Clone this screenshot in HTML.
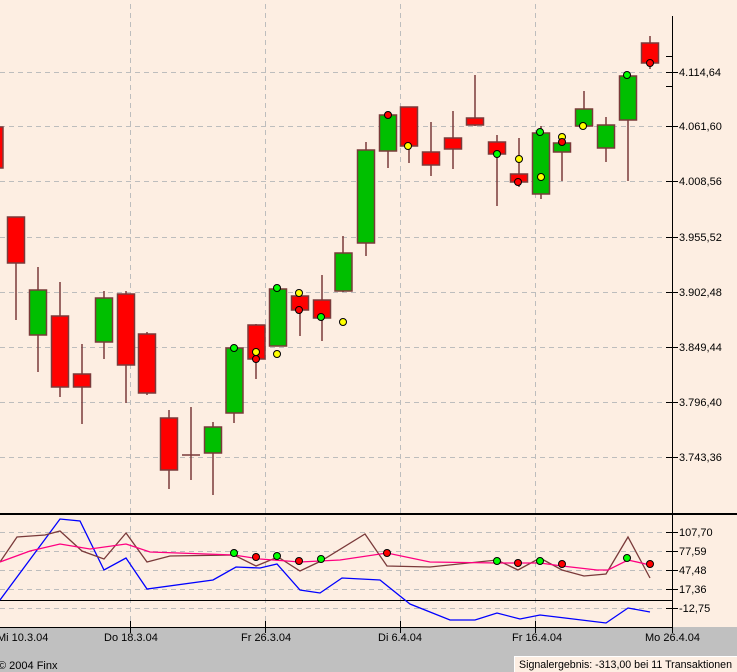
<!DOCTYPE html>
<html><head><meta charset="utf-8"><style>
html,body{margin:0;padding:0;background:#c0c0c0;}
svg{display:block;font-family:"Liberation Sans",sans-serif;}
</style></head><body>
<svg width="737" height="672" viewBox="0 0 737 672" xmlns="http://www.w3.org/2000/svg">
<rect x="0" y="0" width="737" height="627" fill="#fdeee2"/>
<rect x="0" y="627" width="737" height="45" fill="#c0c0c0"/>
<g stroke="#bdbdbd" stroke-width="1" stroke-dasharray="5,4">
<line x1="0" y1="72.5" x2="668" y2="72.5"/>
<line x1="0" y1="126.5" x2="668" y2="126.5"/>
<line x1="0" y1="181.5" x2="668" y2="181.5"/>
<line x1="0" y1="237.5" x2="668" y2="237.5"/>
<line x1="0" y1="292.5" x2="668" y2="292.5"/>
<line x1="0" y1="347.5" x2="668" y2="347.5"/>
<line x1="0" y1="402.5" x2="668" y2="402.5"/>
<line x1="0" y1="457.5" x2="668" y2="457.5"/>
<line x1="0" y1="532.5" x2="668" y2="532.5"/>
<line x1="0" y1="551.5" x2="668" y2="551.5"/>
<line x1="0" y1="570.5" x2="668" y2="570.5"/>
<line x1="0" y1="589.5" x2="668" y2="589.5"/>
<line x1="0" y1="608.5" x2="668" y2="608.5"/>
<line x1="130.5" y1="4" x2="130.5" y2="627"/>
<line x1="265.5" y1="4" x2="265.5" y2="627"/>
<line x1="400.5" y1="4" x2="400.5" y2="627"/>
<line x1="535.5" y1="4" x2="535.5" y2="627"/>
</g>
<g stroke="#000">
<line x1="672.5" y1="16" x2="672.5" y2="627"/>
<line x1="0" y1="514" x2="737" y2="514" stroke-width="2"/>
<line x1="0" y1="600.5" x2="672" y2="600.5"/>
<line x1="0" y1="627.5" x2="672" y2="627.5"/>
<line x1="666" y1="56.5" x2="672" y2="56.5"/><line x1="666" y1="86.5" x2="672" y2="86.5"/>
<line x1="666" y1="72.5" x2="678" y2="72.5"/><line x1="666" y1="126.5" x2="678" y2="126.5"/>
<line x1="666" y1="181.5" x2="678" y2="181.5"/><line x1="666" y1="237.5" x2="678" y2="237.5"/>
<line x1="666" y1="292.5" x2="678" y2="292.5"/><line x1="666" y1="347.5" x2="678" y2="347.5"/>
<line x1="666" y1="402.5" x2="678" y2="402.5"/><line x1="666" y1="457.5" x2="678" y2="457.5"/>
<line x1="666" y1="532.5" x2="678" y2="532.5"/><line x1="666" y1="551.5" x2="678" y2="551.5"/>
<line x1="666" y1="570.5" x2="678" y2="570.5"/><line x1="666" y1="589.5" x2="678" y2="589.5"/>
<line x1="666" y1="608.5" x2="678" y2="608.5"/>
<line x1="130.5" y1="621" x2="130.5" y2="633"/><line x1="265.5" y1="621" x2="265.5" y2="633"/>
<line x1="400.5" y1="621" x2="400.5" y2="633"/><line x1="535.5" y1="621" x2="535.5" y2="633"/>
<line x1="672.5" y1="621" x2="672.5" y2="633"/>
</g>
<g font-size="11" fill="#000">
<text x="679" y="76">4.114,64</text><text x="679" y="130">4.061,60</text>
<text x="679" y="185">4.008,56</text><text x="679" y="241">3.955,52</text>
<text x="679" y="296">3.902,48</text><text x="679" y="351">3.849,44</text>
<text x="679" y="406">3.796,40</text><text x="679" y="461">3.743,36</text>
<text x="679" y="536">107,70</text><text x="679" y="555">77,59</text>
<text x="679" y="574">47,48</text><text x="679" y="593">17,36</text>
<text x="679" y="612">-12,75</text>
<text x="-3" y="641">Mi 10.3.04</text><text x="104" y="641">Do 18.3.04</text>
<text x="241" y="641">Fr 26.3.04</text><text x="378" y="641">Di 6.4.04</text>
<text x="512" y="641">Fr 16.4.04</text><text x="645" y="641">Mo 26.4.04</text>
<text x="-2" y="669">© 2004 Finx</text>
</g>
<rect x="514.5" y="656.5" width="224" height="16" fill="#fdeee2" stroke="#fff"/>
<text x="519" y="668" font-size="11" textLength="213" lengthAdjust="spacingAndGlyphs">Signalergebnis: -313,00 bei 11 Transaktionen</text>
<g stroke="#7a3a3a" stroke-width="1.5">
<line x1="16" y1="217" x2="16" y2="320"/><line x1="38" y1="267" x2="38" y2="372"/>
<line x1="60" y1="282" x2="60" y2="397"/><line x1="82" y1="344" x2="82" y2="424"/>
<line x1="104" y1="291" x2="104" y2="359"/><line x1="126" y1="291" x2="126" y2="403"/>
<line x1="147" y1="332" x2="147" y2="395"/><line x1="169" y1="410" x2="169" y2="489"/>
<line x1="191" y1="407" x2="191" y2="480"/><line x1="182" y1="455" x2="200" y2="455"/>
<line x1="213" y1="422" x2="213" y2="495"/><line x1="234" y1="347" x2="234" y2="423"/>
<line x1="256" y1="324" x2="256" y2="379"/><line x1="278" y1="285" x2="278" y2="346"/>
<line x1="300" y1="290" x2="300" y2="336"/><line x1="322" y1="275" x2="322" y2="341"/>
<line x1="343" y1="236" x2="343" y2="292"/><line x1="366" y1="142" x2="366" y2="256"/>
<line x1="388" y1="113" x2="388" y2="168"/><line x1="409" y1="107" x2="409" y2="163"/>
<line x1="431" y1="122" x2="431" y2="176"/><line x1="453" y1="111" x2="453" y2="169"/>
<line x1="475" y1="75" x2="475" y2="126"/><line x1="497" y1="135" x2="497" y2="206"/>
<line x1="519" y1="138" x2="519" y2="187"/><line x1="541" y1="126" x2="541" y2="199"/>
<line x1="562" y1="135" x2="562" y2="181"/><line x1="584" y1="91" x2="584" y2="126"/>
<line x1="606" y1="117" x2="606" y2="162"/><line x1="628" y1="76" x2="628" y2="181"/>
<line x1="650" y1="36" x2="650" y2="69"/>
</g>
<g stroke="#7a3a3a" stroke-width="1.5">
<rect x="-6" y="127" width="9" height="41" fill="#f00"/>
<rect x="7.5" y="217" width="17" height="46" fill="#f00"/>
<rect x="29.5" y="290" width="17" height="45" fill="#00bf00"/>
<rect x="51.5" y="316" width="17" height="71" fill="#f00"/>
<rect x="73.5" y="374" width="17" height="13" fill="#f00"/>
<rect x="95.5" y="298" width="17" height="44" fill="#00bf00"/>
<rect x="117.5" y="294" width="17" height="71" fill="#f00"/>
<rect x="138.5" y="334" width="17" height="59" fill="#f00"/>
<rect x="160.5" y="418" width="17" height="52" fill="#f00"/>
<rect x="204.5" y="427" width="17" height="26" fill="#00bf00"/>
<rect x="226" y="348" width="17" height="65" fill="#00bf00"/>
<rect x="248" y="325" width="17" height="34" fill="#f00"/>
<rect x="269.5" y="289" width="17" height="57" fill="#00bf00"/>
<rect x="291.5" y="296" width="17" height="14" fill="#f00"/>
<rect x="313.5" y="300" width="17" height="18" fill="#f00"/>
<rect x="335" y="253" width="17" height="38" fill="#00bf00"/>
<rect x="357.5" y="150" width="17" height="93" fill="#00bf00"/>
<rect x="379.5" y="115" width="17" height="36" fill="#00bf00"/>
<rect x="400.5" y="107" width="17" height="39" fill="#f00"/>
<rect x="422.5" y="152" width="17" height="13" fill="#f00"/>
<rect x="444.5" y="138" width="17" height="11" fill="#f00"/>
<rect x="466.5" y="118" width="17" height="7" fill="#f00"/>
<rect x="488.5" y="142" width="17" height="12" fill="#f00"/>
<rect x="510.5" y="174" width="17" height="8" fill="#f00"/>
<rect x="532.5" y="133" width="17" height="61" fill="#00bf00"/>
<rect x="553.5" y="143" width="17" height="9" fill="#00bf00"/>
<rect x="575.5" y="109" width="17" height="17" fill="#00bf00"/>
<rect x="597.5" y="125" width="17" height="23" fill="#00bf00"/>
<rect x="619.5" y="76" width="17" height="44" fill="#00bf00"/>
<rect x="641.5" y="43" width="17" height="20" fill="#f00"/>
</g>
<g fill="none" stroke-width="1.3">
<polyline stroke="#0000ff" points="0,600 60,519 80,521 104,570 126,558 147,589 213,580 236,567 260,568 277,564 300,590 320,593 342,578 380,580 410,604 450,620 475,620 497,613 520,619 540,615 565,618 606,623 628,608 650,612"/>
<polyline stroke="#7a3a3a" points="0,562 17,537 45,535 60,531 82,551 104,559 126,533 147,562 170,556 234,555 256,566 278,557 300,571 321,561 365,534 387,566 430,567 497,560 518,570 540,558 562,570 584,576 606,574 628,537 650,578"/>
<polyline stroke="#ff0080" points="0,562 30,551 60,544 90,549 126,544 150,552 234,555 260,559 300,562 340,560 387,553 430,562 497,563 540,563 562,566 597,570 608,570 628,560 650,565"/>
</g>
<g stroke="#000" stroke-width="1">
<circle cx="388" cy="115" r="3.5" fill="#f00"/><circle cx="408" cy="146" r="3.5" fill="#ff0"/>
<circle cx="497" cy="154" r="3.5" fill="#0f0"/><circle cx="519" cy="159" r="3.5" fill="#ff0"/>
<circle cx="518" cy="182" r="3.5" fill="#f00"/><circle cx="541" cy="177" r="3.5" fill="#ff0"/>
<circle cx="540" cy="132" r="3.5" fill="#0f0"/><circle cx="562" cy="137" r="3.5" fill="#ff0"/>
<circle cx="562" cy="142" r="3.5" fill="#f00"/><circle cx="583" cy="126" r="3.5" fill="#ff0"/>
<circle cx="627" cy="75" r="3.5" fill="#0f0"/><circle cx="650" cy="63" r="3.5" fill="#f00"/>
<circle cx="234" cy="348" r="3.5" fill="#0f0"/><circle cx="256" cy="352" r="3.5" fill="#ff0"/>
<circle cx="256" cy="359" r="3.5" fill="#f00"/><circle cx="277" cy="354" r="3.5" fill="#ff0"/>
<circle cx="277" cy="288" r="3.5" fill="#0f0"/><circle cx="299" cy="293" r="3.5" fill="#ff0"/>
<circle cx="299" cy="310" r="3.5" fill="#f00"/><circle cx="321" cy="317" r="3.5" fill="#0f0"/>
<circle cx="343" cy="322" r="3.5" fill="#ff0"/>
<circle cx="234" cy="553" r="3.5" fill="#0f0"/><circle cx="256" cy="557" r="3.5" fill="#f00"/>
<circle cx="277" cy="556" r="3.5" fill="#0f0"/><circle cx="299" cy="561" r="3.5" fill="#f00"/>
<circle cx="321" cy="559" r="3.5" fill="#0f0"/><circle cx="387" cy="553" r="3.5" fill="#f00"/>
<circle cx="497" cy="561" r="3.5" fill="#0f0"/><circle cx="518" cy="563" r="3.5" fill="#f00"/>
<circle cx="540" cy="561" r="3.5" fill="#0f0"/><circle cx="562" cy="564" r="3.5" fill="#f00"/>
<circle cx="627" cy="558" r="3.5" fill="#0f0"/><circle cx="650" cy="564" r="3.5" fill="#f00"/>
</g>
</svg>
</body></html>
